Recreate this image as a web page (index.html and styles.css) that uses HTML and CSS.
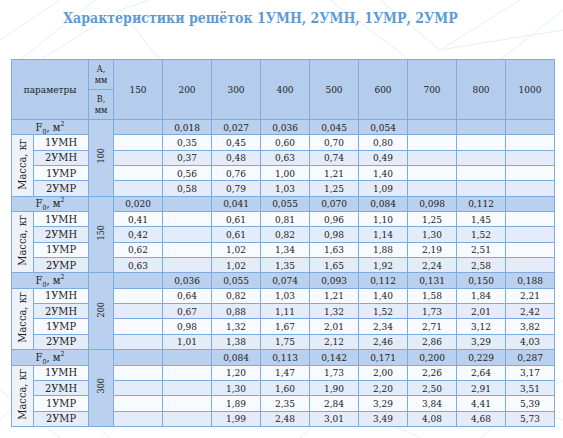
FILE: index.html
```html
<!DOCTYPE html>
<html>
<head>
  <title>Характеристики решёток</title>
  <meta charset="UTF-8">
  <link rel="stylesheet" href="styles.css">
</head>
<body>
  <svg class="backdrop" width="563" height="438" viewBox="0 0 563 438">
    <g stroke="#e6eef7" stroke-width="1" fill="none">
      <path d="M0 40 L60 0 M20 60 L95 0 M40 60 L120 10 L160 60 M120 10 L150 0"/>
      <path d="M330 0 L410 60 M380 0 L440 50 L520 0 M440 50 L563 30 M500 60 L563 10"/>
      <path d="M0 390 L60 438 M0 420 L40 380 L110 438 M40 380 L90 430"/>
      <path d="M300 438 L340 400 L420 438 M480 438 L520 405 L563 420 M520 405 L563 380"/>
    </g>
  </svg>
  <h1 class="title">Характеристики решёток 1УМН, 2УМН, 1УМР, 2УМР</h1>
  <table class="specs">
    <colgroup>
      <col class="c-mass"><col class="c-label"><col class="c-size">
      <col span="9" class="c-val">
    </colgroup>
    <thead>
      <tr>
        <th colspan="2" rowspan="2">параметры</th>
        <th class="size-head">A,<br>мм</th>
        <th rowspan="2">150</th><th rowspan="2">200</th><th rowspan="2">300</th>
        <th rowspan="2">400</th><th rowspan="2">500</th><th rowspan="2">600</th>
        <th rowspan="2">700</th><th rowspan="2">800</th><th rowspan="2">1000</th>
      </tr>
      <tr>
        <th class="size-head">B,<br>мм</th>
      </tr>
    </thead>

    <!-- B = 100 -->
    <tbody>
      <tr class="area">
        <td colspan="2" class="name">F<sub>0</sub>, м<sup>2</sup></td>
        <td rowspan="5" class="size"><span class="vert">100</span></td>
        <td></td><td>0,018</td><td>0,027</td><td>0,036</td><td>0,045</td><td>0,054</td><td></td><td></td><td></td>
      </tr>
      <tr class="light">
        <td rowspan="4" class="mass"><span class="vert">Масса, кг</span></td>
        <td class="name">1УМН</td>
        <td></td><td>0,35</td><td>0,45</td><td>0,60</td><td>0,70</td><td>0,80</td><td></td><td></td><td></td>
      </tr>
      <tr class="tint">
        <td class="name">2УМН</td>
        <td></td><td>0,37</td><td>0,48</td><td>0,63</td><td>0,74</td><td>0,49</td><td></td><td></td><td></td>
      </tr>
      <tr class="light">
        <td class="name">1УМР</td>
        <td></td><td>0,56</td><td>0,76</td><td>1,00</td><td>1,21</td><td>1,40</td><td></td><td></td><td></td>
      </tr>
      <tr class="tint">
        <td class="name">2УМР</td>
        <td></td><td>0,58</td><td>0,79</td><td>1,03</td><td>1,25</td><td>1,09</td><td></td><td></td><td></td>
      </tr>
    </tbody>

    <!-- B = 150 -->
    <tbody>
      <tr class="area">
        <td colspan="2" class="name">F<sub>0</sub>, м<sup>2</sup></td>
        <td rowspan="5" class="size"><span class="vert">150</span></td>
        <td>0,020</td><td></td><td>0,041</td><td>0,055</td><td>0,070</td><td>0,084</td><td>0,098</td><td>0,112</td><td></td>
      </tr>
      <tr class="light">
        <td rowspan="4" class="mass"><span class="vert">Масса, кг</span></td>
        <td class="name">1УМН</td>
        <td>0,41</td><td></td><td>0,61</td><td>0,81</td><td>0,96</td><td>1,10</td><td>1,25</td><td>1,45</td><td></td>
      </tr>
      <tr class="tint">
        <td class="name">2УМН</td>
        <td>0,42</td><td></td><td>0,61</td><td>0,82</td><td>0,98</td><td>1,14</td><td>1,30</td><td>1,52</td><td></td>
      </tr>
      <tr class="light">
        <td class="name">1УМР</td>
        <td>0,62</td><td></td><td>1,02</td><td>1,34</td><td>1,63</td><td>1,88</td><td>2,19</td><td>2,51</td><td></td>
      </tr>
      <tr class="tint">
        <td class="name">2УМР</td>
        <td>0,63</td><td></td><td>1,02</td><td>1,35</td><td>1,65</td><td>1,92</td><td>2,24</td><td>2,58</td><td></td>
      </tr>
    </tbody>

    <!-- B = 200 -->
    <tbody>
      <tr class="area">
        <td colspan="2" class="name">F<sub>0</sub>, м<sup>2</sup></td>
        <td rowspan="5" class="size"><span class="vert">200</span></td>
        <td></td><td>0,036</td><td>0,055</td><td>0,074</td><td>0,093</td><td>0,112</td><td>0,131</td><td>0,150</td><td>0,188</td>
      </tr>
      <tr class="light">
        <td rowspan="4" class="mass"><span class="vert">Масса, кг</span></td>
        <td class="name">1УМН</td>
        <td></td><td>0,64</td><td>0,82</td><td>1,03</td><td>1,21</td><td>1,40</td><td>1,58</td><td>1,84</td><td>2,21</td>
      </tr>
      <tr class="tint">
        <td class="name">2УМН</td>
        <td></td><td>0,67</td><td>0,88</td><td>1,11</td><td>1,32</td><td>1,52</td><td>1,73</td><td>2,01</td><td>2,42</td>
      </tr>
      <tr class="light">
        <td class="name">1УМР</td>
        <td></td><td>0,98</td><td>1,32</td><td>1,67</td><td>2,01</td><td>2,34</td><td>2,71</td><td>3,12</td><td>3,82</td>
      </tr>
      <tr class="tint">
        <td class="name">2УМР</td>
        <td></td><td>1,01</td><td>1,38</td><td>1,75</td><td>2,12</td><td>2,46</td><td>2,86</td><td>3,29</td><td>4,03</td>
      </tr>
    </tbody>

    <!-- B = 300 -->
    <tbody>
      <tr class="area">
        <td colspan="2" class="name">F<sub>0</sub>, м<sup>2</sup></td>
        <td rowspan="5" class="size"><span class="vert">300</span></td>
        <td></td><td></td><td>0,084</td><td>0,113</td><td>0,142</td><td>0,171</td><td>0,200</td><td>0,229</td><td>0,287</td>
      </tr>
      <tr class="light">
        <td rowspan="4" class="mass"><span class="vert">Масса, кг</span></td>
        <td class="name">1УМН</td>
        <td></td><td></td><td>1,20</td><td>1,47</td><td>1,73</td><td>2,00</td><td>2,26</td><td>2,64</td><td>3,17</td>
      </tr>
      <tr class="tint">
        <td class="name">2УМН</td>
        <td></td><td></td><td>1,30</td><td>1,60</td><td>1,90</td><td>2,20</td><td>2,50</td><td>2,91</td><td>3,51</td>
      </tr>
      <tr class="light">
        <td class="name">1УМР</td>
        <td></td><td></td><td>1,89</td><td>2,35</td><td>2,84</td><td>3,29</td><td>3,84</td><td>4,41</td><td>5,39</td>
      </tr>
      <tr class="tint">
        <td class="name">2УМР</td>
        <td></td><td></td><td>1,99</td><td>2,48</td><td>3,01</td><td>3,49</td><td>4,08</td><td>4,68</td><td>5,73</td>
      </tr>
    </tbody>
  </table>
</body>
</html>
```

FILE: styles.css
```css
body {
  margin: 0;
  background-color: #fff;
  font-family: "DejaVu Serif Condensed", "DejaVu Serif", serif;
  color: #222;
}
.backdrop {
  position: absolute;
  top: 0;
  left: 0;
  z-index: -1;
}
.title {
  margin: 0;
  padding: 8px 42px 0 0;
  font-size: 14px;
  line-height: 20px;
  font-weight: bold;
  text-align: center;
  color: #5f9bd3;
}
.specs {
  margin: 31px 0 0 11px;
  width: 543px;
  table-layout: fixed;
  border-collapse: collapse;
  border: 1px solid #6fa0d8;
  font-size: 10px;
}
.c-mass { width: 22px; }
.c-label { width: 55px; }
.c-size { width: 25px; }
.c-val { width: 49px; }

.specs th,
.specs td {
  border: 1px solid #7eabdf;
  padding: 0;
  text-align: center;
  vertical-align: middle;
  font-weight: normal;
  line-height: 13px;
}
.specs th {
  height: 29px;
  background-color: #b5cdec;
  font-size: 10px;
}
.specs th.size-head {
  font-size: 9px;
  line-height: 11px;
}
.specs td {
  height: 14.35px;
}
.specs td.name {
  font-size: 11px;
}
.specs td.mass {
  font-size: 11px;
}
.specs td.size {
  font-size: 9px;
  background-color: #b5cdec;
}
.specs tr.area td {
  background-color: #b9d0ee;
}
.specs tr.light td {
  background-color: #f7faff;
}
.specs tr.tint td {
  background-color: #e3ecf8;
}
.specs tr.light td.mass {
  background-color: #eef3fb;
}
.vert {
  display: inline-block;
  writing-mode: vertical-rl;
  transform: rotate(180deg);
  white-space: nowrap;
}
sub, sup {
  font-size: 7px;
  line-height: 0;
}
```
